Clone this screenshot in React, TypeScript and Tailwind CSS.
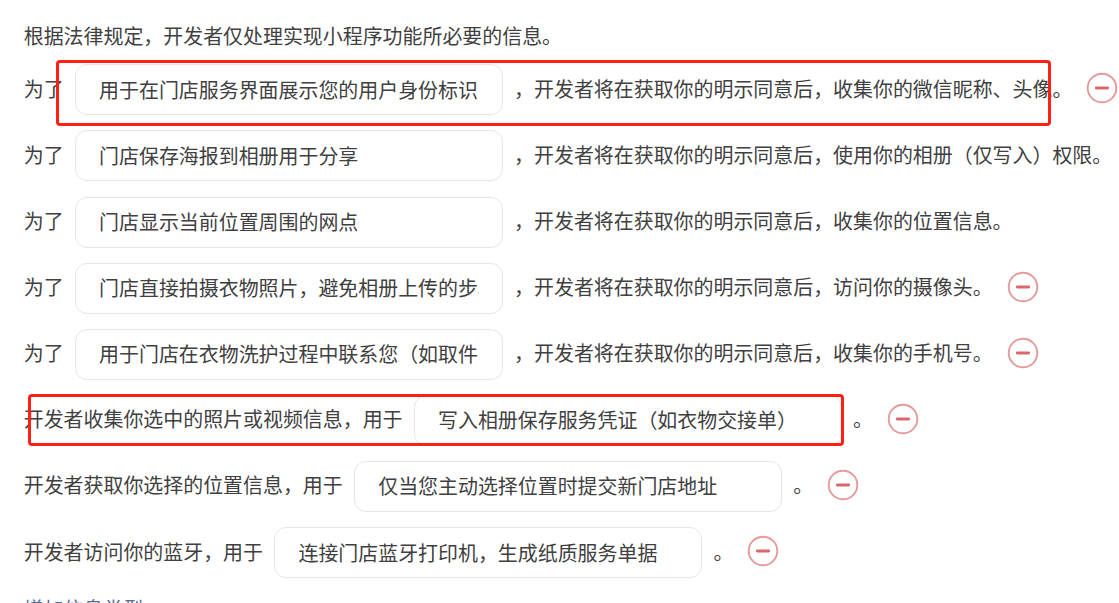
interface PurposeRow {
  prefix: string;
  value: string;
  suffix: string;
  removable: boolean;
}

const CONSENT = '，开发者将在获取你的明示同意后，';

const rows: PurposeRow[] = [
  {
    prefix: '为了',
    value: '用于在门店服务界面展示您的用户身份标识',
    suffix: `${CONSENT}收集你的微信昵称、头像。`,
    removable: true,
  },
  {
    prefix: '为了',
    value: '门店保存海报到相册用于分享',
    suffix: `${CONSENT}使用你的相册（仅写入）权限。`,
    removable: false,
  },
  {
    prefix: '为了',
    value: '门店显示当前位置周围的网点',
    suffix: `${CONSENT}收集你的位置信息。`,
    removable: false,
  },
  {
    prefix: '为了',
    value: '门店直接拍摄衣物照片，避免相册上传的步骤',
    suffix: `${CONSENT}访问你的摄像头。`,
    removable: true,
  },
  {
    prefix: '为了',
    value: '用于门店在衣物洗护过程中联系您（如取件',
    suffix: `${CONSENT}收集你的手机号。`,
    removable: true,
  },
  {
    prefix: '开发者收集你选中的照片或视频信息，用于',
    value: '写入相册保存服务凭证（如衣物交接单）',
    suffix: '。',
    removable: true,
  },
  {
    prefix: '开发者获取你选择的位置信息，用于',
    value: '仅当您主动选择位置时提交新门店地址',
    suffix: '。',
    removable: true,
  },
  {
    prefix: '开发者访问你的蓝牙，用于',
    value: '连接门店蓝牙打印机，生成纸质服务单据',
    suffix: '。',
    removable: true,
  },
];

function RemoveButton() {
  return (
    <button type="button" aria-label="删除" className="ml-[14px] -mt-[3px] shrink-0">
      <svg width="32" height="32" viewBox="0 0 32 32" fill="none" className="block">
        <circle cx="16" cy="16" r="14.3" stroke="#e59a9c" strokeWidth="1.9" />
        <path d="M10.3 16h11.4" stroke="#d9686c" strokeWidth="2.9" strokeLinecap="round" />
      </svg>
    </button>
  );
}

function Row({ prefix, value, suffix, removable }: PurposeRow) {
  return (
    <div className="flex h-[66.1px] items-center whitespace-nowrap">
      <span className="-mt-[2px] shrink-0">{prefix}</span>
      <div className="ml-[11.5px] flex h-[51px] w-[427.5px] shrink-0 items-center rounded-xl border border-[#e6e6e6] px-[23px]">
        <span className="w-full overflow-hidden">{value}</span>
      </div>
      <span className="-mt-[2px] ml-[11.5px] shrink-0">{suffix}</span>
      {removable && <RemoveButton />}
    </div>
  );
}

export default function App() {
  return (
    <div
      lang="zh-CN"
      className="relative h-[603px] w-[1119px] overflow-hidden bg-white pl-[23.7px] font-['Noto_Sans_CJK_SC',sans-serif] text-[19.94px] leading-[30px] text-[#404040]"
    >
      <p className="pt-[21px]">根据法律规定，开发者仅处理实现小程序功能所必要的信息。</p>

      <div className="mt-[5.8px]">
        {rows.map((row) => (
          <Row key={row.value} {...row} />
        ))}
      </div>

      <a href="#" className="mt-[8.5px] block w-fit text-[#576b95]">
        增加信息类型
      </a>

      {/* review marks */}
      <div className="pointer-events-none absolute left-[56px] top-[60px] h-[66px] w-[995px] rounded-[4px] border-3 border-[#ff2116]" />
      <div className="pointer-events-none absolute left-[28px] top-[394px] h-[52px] w-[816px] rounded-[4px] border-3 border-[#ff2116]" />
    </div>
  );
}
